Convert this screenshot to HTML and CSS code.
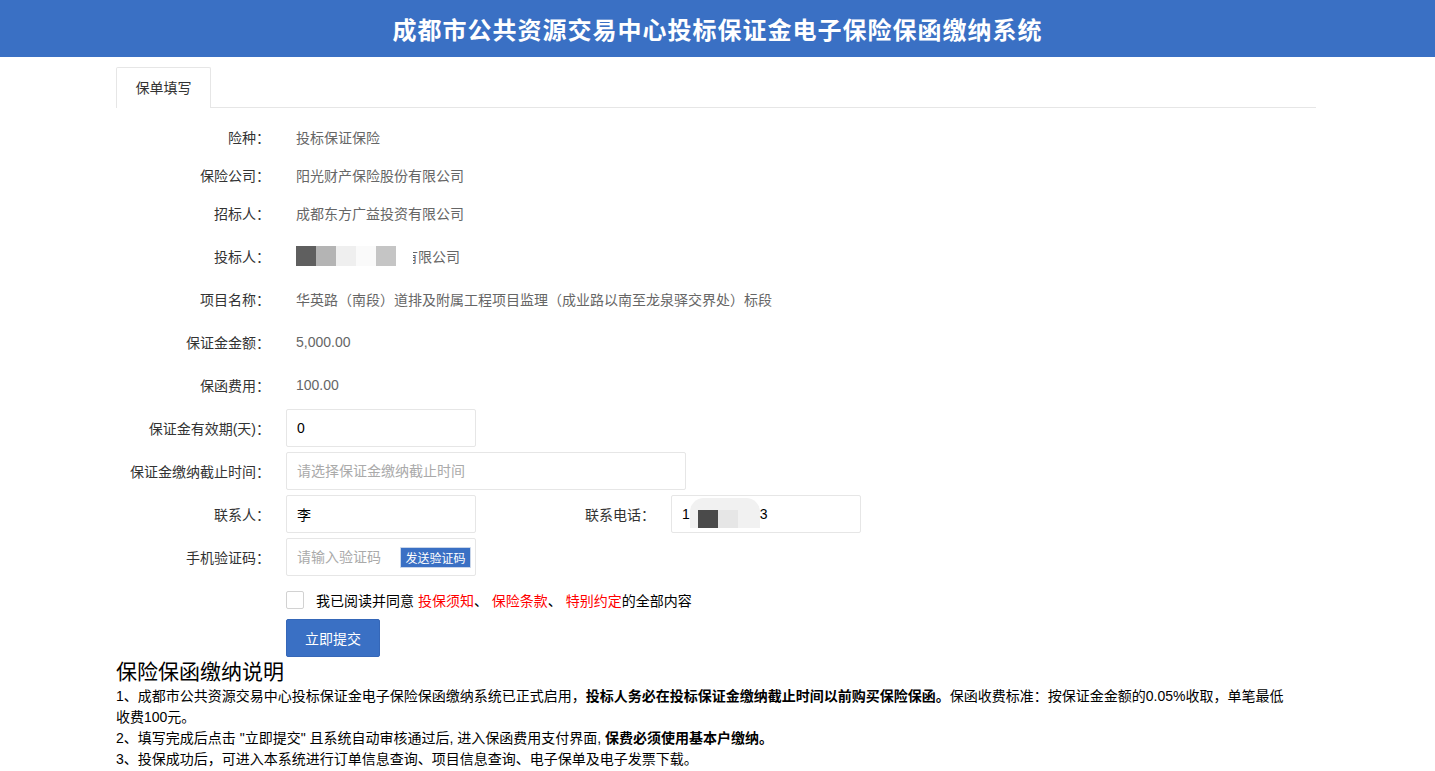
FILE: index.html
```html
<!DOCTYPE html>
<html lang="zh-CN">

<head>
     <meta charset="UTF-8">
     <meta name="viewport" content="width=device-width, initial-scale=1.0">
     <title>成都市公共资源交易中心投标保证金电子保险保函缴纳系统</title>
     <link rel="stylesheet" href="styles.css">
</head>

<body>
     <div class="header">
          <h1>成都市公共资源交易中心投标保证金电子保险保函缴纳系统</h1>
     </div>
     <div class="container">
          <div class="tabs">
               <span class="tab active">保单填写</span>
          </div>
          <div class="form">
               <div class="row tight">
                    <label>险种：</label>
                    <span class="value">投标保证保险</span>
               </div>
               <div class="row tight">
                    <label>保险公司：</label>
                    <span class="value">阳光财产保险股份有限公司</span>
               </div>
               <div class="row tight">
                    <label>招标人：</label>
                    <span class="value">成都东方广益投资有限公司</span>
               </div>
               <div class="row">
                    <label>投标人：</label>
                    <span class="value">
                         <span class="mosaic">
                              <i class="m1"></i><i class="m2"></i><i class="m3"></i><i class="m4"></i><i class="m5"></i>
                         </span>
                         <span class="cut">有</span>限公司
                    </span>
               </div>
               <div class="row">
                    <label>项目名称：</label>
                    <span class="value">华英路（南段）道排及附属工程项目监理（成业路以南至龙泉驿交界处）标段</span>
               </div>
               <div class="row">
                    <label>保证金金额：</label>
                    <span class="value">5,000.00</span>
               </div>
               <div class="row">
                    <label>保函费用：</label>
                    <span class="value">100.00</span>
               </div>
               <div class="row">
                    <label>保证金有效期(天)：</label>
                    <input class="input" type="text" value="0">
               </div>
               <div class="row">
                    <label>保证金缴纳截止时间：</label>
                    <input class="input wide" type="text" placeholder="请选择保证金缴纳截止时间">
               </div>
               <div class="row">
                    <div class="field">
                         <label>联系人：</label>
                         <input class="input" type="text" value="李">
                    </div>
                    <div class="field">
                         <label>联系电话：</label>
                         <div class="phone">
                              <span>1</span>
                              <span class="blur"><i class="d"></i><i class="l"></i></span>
                              <span>3</span>
                         </div>
                    </div>
               </div>
               <div class="row">
                    <label>手机验证码：</label>
                    <div class="codeBox">
                         <input class="input" type="text" placeholder="请输入验证码">
                         <button class="sendCode">发送验证码</button>
                    </div>
               </div>
               <div class="agree">
                    <span class="checkbox"></span>
                    <span>我已阅读并同意 <a>投保须知</a>、 <a>保险条款</a>、 <a>特别约定</a>的全部内容</span>
               </div>
               <div class="submitRow">
                    <button class="submit">立即提交</button>
               </div>
          </div>
          <div class="notes">
               <h2>保险保函缴纳说明</h2>
               <p>1、成都市公共资源交易中心投标保证金电子保险保函缴纳系统已正式启用，<b>投标人务必在投标保证金缴纳截止时间以前购买保险保函。</b>保函收费标准：按保证金金额的0.05%收取，单笔最低收费100元。</p>
               <p>2、填写完成后点击 "立即提交" 且系统自动审核通过后, 进入保函费用支付界面, <b>保费必须使用基本户缴纳。</b></p>
               <p>3、投保成功后，可进入本系统进行订单信息查询、项目信息查询、电子保单及电子发票下载。</p>
          </div>
     </div>
</body>

</html>
```

FILE: styles.css
```css
* {
     margin: 0px;
     padding: 0px;
     outline: none;
     box-sizing: border-box;
     font-family: "Liberation Sans", "Noto Sans CJK SC", sans-serif;
}

body {
     background-color: #fff;
     color: #333;
     font-size: 14px;
}

.header {
     height: 57px;
     background-color: #3a70c4;
     display: flex;
     justify-content: center;
     align-items: center;
     h1 {
          color: #fff;
          font-size: 24px;
          font-weight: bold;
          letter-spacing: 1px;
     }
}

.container {
     width: 1203px;
     padding-right: 3px;
     margin: 0px auto;
}

.tabs {
     margin-top: 10px;
     height: 41px;
     border-bottom: 1px solid #e6e6e6;
     display: flex;
     .tab {
          width: 95px;
          height: 41px;
          line-height: 40px;
          text-align: center;
          border: 1px solid #e6e6e6;
          border-bottom: none;
          border-radius: 2px 2px 0px 0px;
          background-color: #fff;
          color: #333;
          font-size: 14px;
     }
}

.form {
     padding-top: 10px;
}

.row {
     display: flex;
     align-items: center;
     height: 38px;
     margin-top: 5px;
     label {
          width: 154px;
          text-align: right;
          color: #333;
          margin-right: 16px;
          flex-shrink: 0;
     }
     .value {
          padding-left: 10px;
          color: #666;
          display: flex;
          align-items: center;
     }
}

.row.tight {
     margin-top: 0px;
}

.mosaic {
     display: flex;
     margin-right: 17px;
     i {
          width: 20px;
          height: 20px;
     }
     .m1 { background-color: #5f5f5f; }
     .m2 { background-color: #b4b4b4; }
     .m3 { background-color: #efefef; }
     .m4 { background-color: #fafafa; }
     .m5 { background-color: #c5c5c5; }
}

.cut {
     display: inline-block;
     width: 5px;
     overflow: hidden;
     text-indent: -9px;
     white-space: nowrap;
}

.input {
     width: 190px;
     height: 38px;
     border: 1px solid #e6e6e6;
     border-radius: 2px;
     padding-left: 10px;
     font-size: 14px;
     color: #000;
     background-color: #fff;
}

.input::placeholder {
     color: #aaa;
}

.input.wide {
     width: 400px;
}

.field {
     display: flex;
     align-items: center;
     width: 385px;
}

.phone {
     width: 190px;
     height: 38px;
     border: 1px solid #e6e6e6;
     border-radius: 2px;
     padding-left: 10px;
     display: flex;
     align-items: center;
     color: #000;
     .blur {
          width: 70px;
          height: 30px;
          margin-top: 2px;
          align-self: flex-start;
          background-color: #f1f1f1;
          border-radius: 14px 14px 0px 0px;
          display: flex;
          align-items: flex-end;
          padding-left: 8px;
          i {
               width: 20px;
               height: 18px;
          }
          .d { background-color: #4a4a4a; }
          .l { background-color: #e6e6e6; }
     }
}

.codeBox {
     position: relative;
     .sendCode {
          position: absolute;
          right: 5px;
          top: 9px;
          width: 71px;
          height: 21px;
          background-color: #3a70c4;
          color: #fff;
          border: 1px solid #c9d6ea;
          border-radius: 1px;
          font-size: 12px;
     }
}

.agree {
     display: flex;
     align-items: center;
     margin-top: 14px;
     padding-left: 170px;
     color: #000;
     .checkbox {
          width: 18px;
          height: 18px;
          border: 1px solid #d2d2d2;
          border-radius: 2px;
          background-color: #fff;
          margin-right: 12px;
     }
     a {
          color: #f00;
     }
}

.submitRow {
     padding-left: 170px;
     margin-top: 9px;
}

.submit {
     width: 94px;
     height: 38px;
     background-color: #3a70c4;
     color: #fff;
     border: 1px solid #3567b8;
     border-radius: 2px;
     font-size: 14px;
}

.notes {
     color: #000;
     h2 {
          font-size: 21px;
          font-weight: normal;
          line-height: 28px;
          margin-top: 1px;
     }
     p {
          font-size: 14px;
          line-height: 21px;
          padding-right: 30px;
     }
}
```
